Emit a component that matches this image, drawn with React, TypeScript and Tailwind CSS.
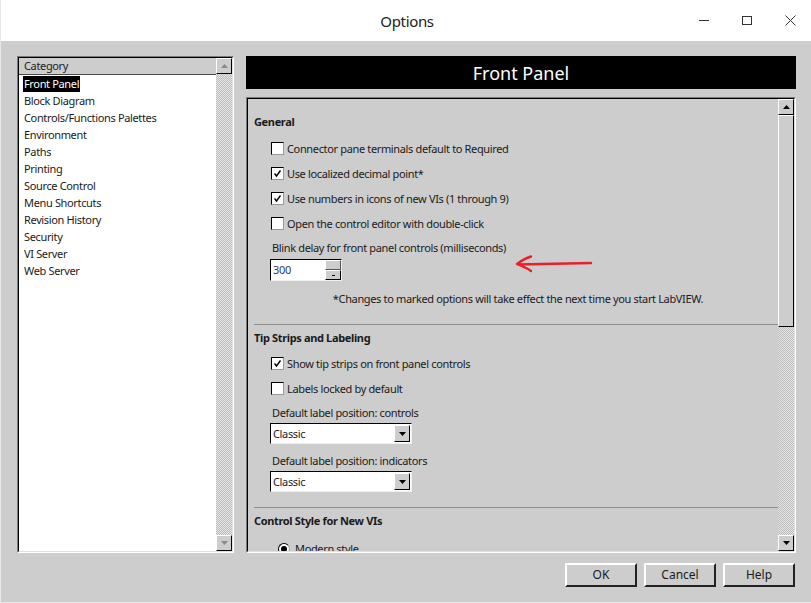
import React from "react";

const categories = [
  "Front Panel",
  "Block Diagram",
  "Controls/Functions Palettes",
  "Environment",
  "Paths",
  "Printing",
  "Source Control",
  "Menu Shortcuts",
  "Revision History",
  "Security",
  "VI Server",
  "Web Server",
];

function Triangle({ down, muted }: { down?: boolean; muted?: boolean }) {
  return (
    <svg width="7" height="4" viewBox="0 0 7 4" className={down ? "rotate-180" : ""}>
      <path d="M0 4 L3.5 0 L7 4 Z" fill={muted ? "#8a8a8a" : "#000"} />
    </svg>
  );
}

function ScrollButton({ down, muted }: { down?: boolean; muted?: boolean }) {
  return (
    <div className="h-[16px] w-full shrink-0 flex items-center justify-center bg-[#cdcdcd] border border-t-white border-l-white border-b-black border-r-black">
      <Triangle down={down} muted={muted} />
    </div>
  );
}

function Checker({ className = "" }: { className?: string }) {
  return (
    <div
      className={`bg-[repeating-conic-gradient(#bdbdbd_0%_25%,#e4e4e4_0%_50%)] bg-size-[2px_2px] ${className}`}
    />
  );
}

function Checkbox({ checked, label }: { checked?: boolean; label: string }) {
  return (
    <div className="h-[25px] flex items-center pl-[17px]">
      <div className="w-[13px] h-[13px] bg-white border border-t-black border-l-black border-b-[#9a9a9a] border-r-[#9a9a9a] flex items-center justify-center">
        {checked && (
          <svg width="9" height="9" viewBox="0 0 9 9">
            <path d="M1.5 4.5 L3.5 7 L7.5 1.5" stroke="#000" strokeWidth="1.4" fill="none" />
          </svg>
        )}
      </div>
      <span className="ml-[3px]">{label}</span>
    </div>
  );
}

function Select({ value }: { value: string }) {
  return (
    <div className="ml-[16px] mt-[2px] w-[142px] h-[21px] shrink-0 flex border border-t-black border-l-black border-b-[#f0f0f0] border-r-[#f0f0f0] bg-white">
      <div className="flex-1 flex items-center pl-[2px]">{value}</div>
      <div className="w-[16px] m-[1px] flex items-center justify-center bg-[#cdcdcd] border border-t-white border-l-white border-b-black border-r-black">
        <Triangle down />
      </div>
    </div>
  );
}

function Separator({ className = "" }: { className?: string }) {
  return <div className={`h-px shrink-0 bg-[#8c8c8c] ${className}`} />;
}

export default function App() {
  return (
    <div className="w-[811px] h-[603px] flex flex-col bg-[#cdcdcd] font-['Noto_Sans',sans-serif] text-[11px] leading-[16px] tracking-[-0.35px] text-[#1a1a1a] border-l border-b border-[#e8e8e8] overflow-hidden">
      {/* Title bar */}
      <div className="h-[41px] shrink-0 bg-white flex items-center relative">
        <div className="flex-1 text-center text-[15px] text-[#222] pl-[2px]">Options</div>
        <div className="absolute right-[-1px] top-0 h-full flex items-center">
          <div className="w-[43px] flex justify-center">
            <svg width="11" height="11" viewBox="0 0 11 11">
              <path d="M0 5.5 H10" stroke="#333" strokeWidth="1" />
            </svg>
          </div>
          <div className="w-[43px] flex justify-center">
            <svg width="11" height="11" viewBox="0 0 11 11">
              <rect x="0.5" y="1.5" width="9" height="8" stroke="#333" strokeWidth="1" fill="none" />
            </svg>
          </div>
          <div className="w-[43px] flex justify-center">
            <svg width="11" height="11" viewBox="0 0 11 11">
              <path d="M0.5 0.5 L10.5 10.5 M10.5 0.5 L0.5 10.5" stroke="#333" strokeWidth="1" />
            </svg>
          </div>
        </div>
      </div>

      {/* Body */}
      <div className="flex gap-[12px] pl-[16px] pr-[15px] pt-[15px]">
        {/* Category list */}
        <div className="w-[217px] h-[497px] border border-t-[#7a7a7a] border-l-[#7a7a7a] border-b-white border-r-white">
          <div className="h-full flex border border-t-black border-l-black border-b-[#e0e0e0] border-r-[#e0e0e0] bg-white">
            <div className="flex-1 flex flex-col">
              <div className="h-[17px] flex items-center pl-[5px] bg-[#cdcdcd] border-b border-[#4a4a4a] text-[#222]">
                Category
              </div>
              <div className="flex flex-col pl-[4px]">
                {categories.map((c, i) => (
                  <div key={c} className="h-[17px] flex items-center">
                    <span
                      className={
                        i === 0 ? "bg-black text-white px-[1px]" : "px-[1px] text-[#1a1a1a]"
                      }
                    >
                      {c}
                    </span>
                  </div>
                ))}
              </div>
            </div>
            <div className="w-[16px] flex flex-col">
              <ScrollButton muted />
              <Checker className="flex-1" />
              <ScrollButton down muted />
            </div>
          </div>
        </div>

        {/* Right side */}
        <div className="flex-1 flex flex-col">
          <div className="h-[33px] bg-black text-white flex items-center justify-center text-[18px] tracking-normal">
            Front Panel
          </div>
          <div className="mt-[8px] h-[456px] border border-t-[#7a7a7a] border-l-[#7a7a7a] border-b-white border-r-white">
            <div className="h-full flex border border-t-black border-l-black border-b-[#e0e0e0] border-r-[#e0e0e0] relative overflow-hidden">
              <div className="flex-1 flex flex-col pl-[6px] pt-[15px] overflow-hidden">
                <div className="font-bold">General</div>
                <div className="mt-[6px]">
                  <Checkbox label="Connector pane terminals default to Required" />
                  <Checkbox checked label="Use localized decimal point*" />
                  <Checkbox checked label="Use numbers in icons of new VIs (1 through 9)" />
                  <Checkbox label="Open the control editor with double-click" />
                </div>
                <div className="mt-[4px] pl-[18px]">Blink delay for front panel controls (milliseconds)</div>
                <div className="ml-[16px] mt-[3px] w-[72px] h-[22px] shrink-0 flex border border-t-black border-l-black border-b-[#f0f0f0] border-r-[#f0f0f0] bg-white">
                  <div className="flex-1 flex items-center pl-[2px] text-[#2a3a6a]">300</div>
                  <div className="w-[16px] flex flex-col bg-[#cdcdcd]">
                    <div className="flex-1 border border-t-white border-l-white border-b-[#555] border-r-[#555]" />
                    <div className="flex-1 flex items-center justify-center border border-t-white border-l-white border-b-black border-r-black">
                      <div className="w-[3px] h-px bg-black" />
                    </div>
                  </div>
                </div>
                <div className="mt-[10px] text-center pr-[6px] pl-[10px]">
                  *Changes to marked options will take effect the next time you start LabVIEW.
                </div>
                <Separator className="mt-[17px]" />
                <div className="mt-[5px] font-bold">Tip Strips and Labeling</div>
                <div className="mt-[5px]">
                  <Checkbox checked label="Show tip strips on front panel controls" />
                  <Checkbox label="Labels locked by default" />
                </div>
                <div className="mt-[4px] pl-[18px]">Default label position: controls</div>
                <Select value="Classic" />
                <div className="mt-[9px] pl-[18px]">Default label position: indicators</div>
                <Select value="Classic" />
                <Separator className="mt-[15px]" />
                <div className="mt-[5px] font-bold">Control Style for New VIs</div>
                <div className="mt-[12px] pl-[24px] flex items-center">
                  <div className="w-[12px] h-[12px] rounded-full bg-white border border-t-black border-l-black border-b-[#9a9a9a] border-r-[#9a9a9a] flex items-center justify-center">
                    <div className="w-[6px] h-[6px] rounded-full bg-black" />
                  </div>
                  <span className="ml-[5px]">Modern style</span>
                </div>
              </div>
              <div className="w-[16px] flex flex-col">
                <ScrollButton />
                <div className="h-[212px] shrink-0 bg-[#cdcdcd] border border-t-white border-l-white border-b-black border-r-black" />
                <Checker className="flex-1" />
                <ScrollButton down />
              </div>
              {/* red annotation arrow */}
              <svg
                className="absolute left-[266px] top-[155px]"
                width="80"
                height="22"
                viewBox="0 0 80 22"
              >
                <path
                  d="M77 9 L4 10.5 M17 2.5 C12 4 7 7 3 10 C8 12 13 14 17 17"
                  stroke="#e8202a"
                  strokeWidth="2.4"
                  fill="none"
                  strokeLinecap="round"
                  strokeLinejoin="round"
                />
              </svg>
            </div>
          </div>
        </div>
      </div>

      {/* Buttons */}
      <div className="flex justify-end gap-[7px] pr-[16px] mt-[10px]">
        {["OK", "Cancel", "Help"].map((b) => (
          <div
            key={b}
            className="w-[72px] h-[24px] flex items-center justify-center bg-[#cdcdcd] border-2 border-t-white border-l-white border-b-[#222] border-r-[#222] text-[12px] tracking-normal"
          >
            {b}
          </div>
        ))}
      </div>
    </div>
  );
}
